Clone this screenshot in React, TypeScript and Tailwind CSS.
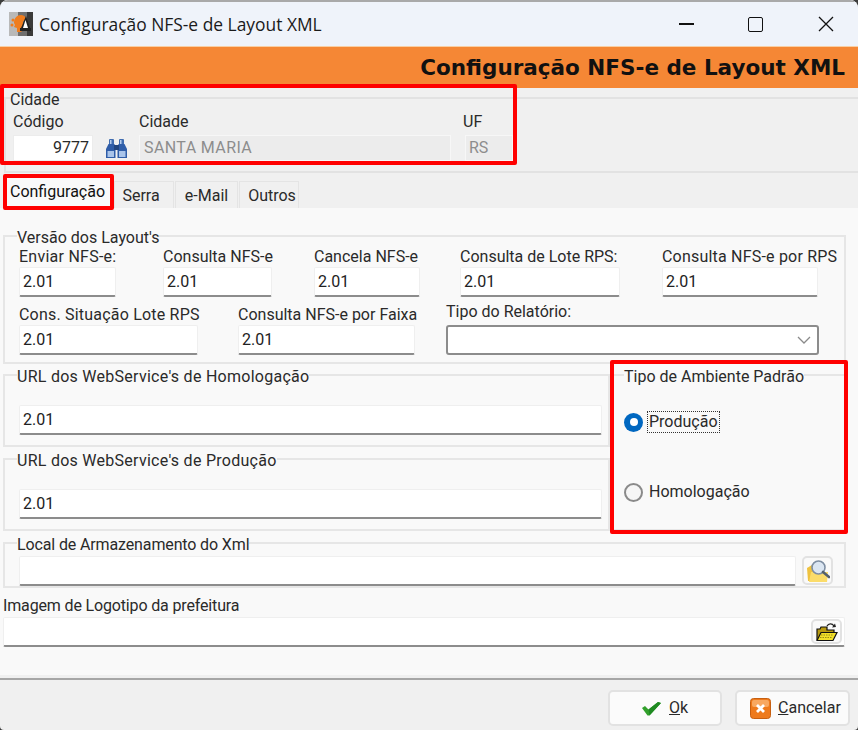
import type { ReactNode } from "react";

const AppIcon = () => (
  <svg width="24" height="24" viewBox="0 0 24 24" className="shrink-0">
    <rect x="0" y="0" width="24" height="24" fill="#6f6f6f" />
    <rect x="0" y="0" width="9" height="24" fill="#b9b9b9" />
    <rect x="18" y="0" width="6" height="24" fill="#3a3a3a" />
    <path d="M5 11c0-5 3-8 7-8 2 0 4 1 5 3l-3 4v8l-2 2H8v-4l-3-1 1-2z" fill="#ef7d1f" />
    <circle cx="4" cy="8" r="1.5" fill="#ef7d1f" />
    <circle cx="3" cy="13" r="1.5" fill="#ef7d1f" />
    <path d="M17 4l4 12h1v3H11v-3h1z" fill="#222" />
    <path d="M16.5 8l2.5 8h-5z" fill="#fff" />
  </svg>
);

const Binoculars = () => (
  <svg width="23" height="20" viewBox="0 0 23 20" className="shrink-0">
    <rect x="4" y="0" width="5" height="6" rx="1" fill="#3f6cb0" />
    <rect x="14" y="0" width="5" height="6" rx="1" fill="#3f6cb0" />
    <path d="M3.500 5h6l1 5v9H1V10z" fill="#2f5da8" />
    <path d="M13.500 5h6l2.500 5v9H12.500V10z" fill="#2f5da8" />
    <rect x="9" y="6" width="5" height="5" fill="#21457f" />
    <rect x="2.500" y="12" width="6.500" height="6" fill="#a9c4ea" />
    <rect x="14" y="12" width="6.500" height="6" fill="#a9c4ea" />
    <rect x="5" y="1" width="1.500" height="4" fill="#b4cbed" />
    <rect x="15" y="1" width="1.500" height="4" fill="#b4cbed" />
  </svg>
);

const FolderSearch = () => (
  <svg width="24" height="24" viewBox="0 0 24 24">
    <path d="M1 9l5-3h4v16H2z" fill="#efc23f" />
    <path d="M3 23l2-10h17l-1 10z" fill="#fbdc6a" />
    <circle cx="12.500" cy="8.500" r="6.500" fill="#dbe6f2" stroke="#7f8fa3" strokeWidth="1.600" />
    <path d="M17 13l6 5" stroke="#55606e" strokeWidth="2.600" strokeLinecap="round" />
  </svg>
);

const FolderOpen = () => (
  <svg width="22" height="20" viewBox="0 0 22 20">
    <path d="M1 18V7h3l1-2h6v3h7v3" fill="#b89a10" stroke="#111" strokeWidth="1.200" />
    <path d="M1 18.500l4-8h16l-4 8z" fill="#f2e02a" stroke="#111" strokeWidth="1.200" />
    <path d="M5 13h12M4 15.500h12" stroke="#8f8410" strokeWidth="0.900" strokeDasharray="1.500 1" />
    <path d="M11 4c1.500-2.500 5-3 7 0" fill="none" stroke="#222" strokeWidth="1.300" />
    <path d="M16 5.500l4-.5-1-3.500z" fill="#222" />
  </svg>
);

const CheckIcon = () => (
  <svg width="21" height="15" viewBox="0 0 21 15">
    <path d="M1 7l3-2 3.500 3.500L17 1l3 1-11.500 12.500h-2z" fill="#32a02c" />
    <path d="M7.500 8.500L17 1l3 1-11.500 12.500z" fill="#1f8a22" />
  </svg>
);

const CancelIcon = () => (
  <svg width="21" height="21" viewBox="0 0 21 21">
    <rect x="0.500" y="0.500" width="20" height="20" rx="3" fill="#ee7a1c" stroke="#c75f10" />
    <rect x="2" y="2" width="17" height="7" rx="2" fill="#f8a860" />
    <path d="M7 7l7 7M14 7l-7 7" stroke="#fff" strokeWidth="2.800" />
  </svg>
);

// caixa de texto no estilo Windows: borda clara e linha escura embaixo
function TextBox({ value, className = "" }: { value?: string; className?: string }) {
  return (
    <div
      className={`h-[30px] bg-white border border-[#efefef] border-b-2 border-b-[#8c8c8c] rounded-[2px] px-[3px] text-[16px] leading-[28px] text-[#222] ${className}`}
    >
      {value}
    </div>
  );
}

function Field({ label, width, className = "", labelClass = "" }: { label: string; width: string; className?: string; labelClass?: string }) {
  return (
    <div className={`shrink-0 ${width} ${className}`}>
      <div className={`h-[20px] mb-[1px] leading-[22px] whitespace-nowrap ${labelClass}`}>{label}</div>
      <TextBox value="2.01" />
    </div>
  );
}

function Group({ title, className = "", legendClass = "", children }: { title: string; className?: string; legendClass?: string; children: ReactNode }) {
  return (
    <fieldset className={`min-w-0 border-2 border-[#e6e6e6] pl-[14px] pr-[6px] ${className}`}>
      <legend className={`-ml-[2px] h-[20px] leading-[23px] whitespace-nowrap ${legendClass}`}>{title}</legend>
      {children}
    </fieldset>
  );
}

function Tab({ label, className = "" }: { label: string; className?: string }) {
  return (
    <div className={`h-[27px] flex items-center justify-center border border-b-0 border-[#e4e4e4] bg-[#f0f0f0] ${className}`}>
      {label}
    </div>
  );
}

function Radio({ checked, label, className = "" }: { checked?: boolean; label: string; className?: string }) {
  return (
    <div className={`flex items-center ${className}`}>
      {checked ? (
        <div className="w-[19px] h-[19px] rounded-full bg-[#0067c0] flex items-center justify-center shrink-0">
          <div className="w-[8px] h-[8px] rounded-full bg-white" />
        </div>
      ) : (
        <div className="w-[19px] h-[19px] rounded-full border-2 border-[#8a8a8a] bg-[#f6f6f6] shrink-0" />
      )}
      <span
        className={
          checked
            ? "ml-[4px] h-[22px] leading-[20px] px-[1px] border border-dotted border-[#333]"
            : "ml-[6px] leading-[22px]"
        }
      >
        {label}
      </span>
    </div>
  );
}

function FooterButton({ children, className = "" }: { children: ReactNode; className?: string }) {
  return (
    <div className={`h-[36px] flex items-center bg-[#fbfbfb] border-2 border-[#e2e2e2] rounded-[5px] ${className}`}>
      {children}
    </div>
  );
}

export default function App() {
  return (
    <div className="relative w-[858px] h-[730px] overflow-hidden bg-[#3c3c3c]">
      <div
        className="w-full h-full flex flex-col bg-[#f0f0f0] text-[#2a2a2a] text-[16px] rounded-t-[8px] rounded-b-[4px] overflow-hidden"
        style={{ fontFamily: 'Roboto, "Noto Sans", sans-serif' }}
      >
        {/* Barra de titulo */}
        <div className="h-[46px] shrink-0 flex items-center pl-[9px] bg-[#eff3fa] border-t-2 border-[#a9a9a9]">
          <AppIcon />
          <span
            className="ml-[6px] text-[17.400px] text-[#1a1a1a]"
            style={{ fontFamily: '"Open Sans", sans-serif' }}
          >
            Configuração NFS-e de Layout XML
          </span>
          <div className="ml-auto flex items-center pr-[24px]">
            <div className="w-[15px] h-[1.500px] bg-[#111]" />
            <div className="ml-[54px] w-[15px] h-[15px] border-[1.500px] border-[#111] rounded-[2px]" />
            <svg width="16" height="16" viewBox="0 0 16 16" className="ml-[55px]">
              <path d="M1 1l14 14M15 1L1 15" stroke="#111" strokeWidth="1.300" />
            </svg>
          </div>
        </div>

        {/* Faixa laranja */}
        <div className="h-[42px] shrink-0 flex items-center justify-end pr-[13px] pt-[2px] bg-[#f58735] border-t border-[#f9cfa4]">
          <span
            className="text-[21.500px] font-bold text-[#111]"
            style={{ fontFamily: '"DejaVu Sans", sans-serif' }}
          >
            Configuração NFS-e de Layout XML
          </span>
        </div>

        {/* Cidade */}
        <fieldset className="h-[85px] shrink-0 ml-[4px] -mr-[4px] border-2 border-[#e2e2e2] px-[7px]">
          <legend className="-ml-[3px] h-[20px] leading-[23px]">Cidade</legend>
          <div className="flex mt-[3px] items-start">
            <div className="w-[80px]">
              <div className="h-[20px] leading-[22px]">Código</div>
              <div className="mt-[4px] h-[26px] bg-white border border-[#ececec] text-right pr-[3px] leading-[23px]">9777</div>
            </div>
            <div className="mt-[28px] ml-[12px]">
              <Binoculars />
            </div>
            <div className="w-[312px] ml-[11px]">
              <div className="h-[20px] leading-[22px]">Cidade</div>
              <div className="mt-[4px] h-[26px] bg-[#ececec] border border-[#f7f7f7] pl-[4px] leading-[23px] tracking-[0.4px] text-[#8d8d8d]">SANTA MARIA</div>
            </div>
            <div className="w-[48px] ml-[14px]">
              <div className="h-[20px] leading-[22px] -ml-[2px]">UF</div>
              <div className="mt-[4px] h-[26px] bg-[#ececec] border border-[#f7f7f7] pl-[3px] leading-[23px] text-[#8d8d8d]">RS</div>
            </div>
          </div>
        </fieldset>

        {/* Abas */}
        <div className="h-[35px] shrink-0 flex items-end pl-[7px]">
          <div className="w-[103px] h-[30px] flex items-center justify-center bg-[#f9f9f9] text-[#111] pb-[2px] pr-[2px]">Configuração</div>
          <Tab label="Serra" className="w-[60px] ml-[4px] pt-[2px] pr-[6px]" />
          <Tab label="e-Mail" className="w-[63px] ml-[1px] pt-[2px]" />
          <Tab label="Outros" className="w-[60px] ml-[1px] pt-[2px] pl-[6px]" />
        </div>

        {/* Painel da aba */}
        <div className="h-[467px] shrink-0 bg-[#f9f9f9] px-[3px] pt-[18px] flex flex-col">
          <Group title="Versão dos Layout's" className="h-[138px] shrink-0 w-[843px]">
            <div className="flex">
              <Field label="Enviar NFS-e:" width="w-[97px]" labelClass="tracking-[0.25px]" />
              <Field label="Consulta NFS-e" width="w-[109px]" className="ml-[47px]" />
              <Field label="Cancela NFS-e" width="w-[106px]" className="ml-[42px]" />
              <Field label="Consulta de Lote RPS:" width="w-[160px]" className="ml-[40px]" />
              <Field label="Consulta NFS-e por RPS" width="w-[156px]" className="ml-[42px]" labelClass="tracking-[0.2px]" />
            </div>
            <div className="flex mt-[7px]">
              <Field label="Cons. Situação Lote RPS" width="w-[179px]" labelClass="tracking-[0.2px]" />
              <Field label="Consulta NFS-e por Faixa" width="w-[177px]" className="ml-[40px]" />
              <div className="w-[373px] ml-[31px] shrink-0">
                <div className="h-[20px] mb-[1px] leading-[22px] -translate-y-[3px]">Tipo do Relatório:</div>
                <div className="h-[30px] flex items-center justify-end pr-[6px] bg-white border-2 border-[#8c8c8c] rounded-[3px]">
                  <svg width="14" height="9" viewBox="0 0 14 9">
                    <path d="M1 1l6 6 6-6" fill="none" stroke="#8a8a8a" strokeWidth="1.300" />
                  </svg>
                </div>
              </div>
            </div>
          </Group>

          <div className="flex mt-[1px] shrink-0">
            <div className="w-[607px] shrink-0">
              <Group title="URL dos WebService's de Homologação" className="h-[82px]" legendClass="tracking-[0.27px]">
                <TextBox value="2.01" className="mt-[20px]" />
              </Group>
              <Group title="URL dos WebService's de Produção" className="h-[82px] mt-[2px]" legendClass="tracking-[0.27px]">
                <TextBox value="2.01" className="mt-[20px]" />
              </Group>
            </div>
            <Group title="Tipo de Ambiente Padrão" className="w-[236px] h-[166px]">
              <Radio checked label="Produção" className="mt-[26px] -ml-[2px]" />
              <Radio label="Homologação" className="mt-[48px] -ml-[2px]" />
            </Group>
          </div>

          <Group title="Local de Armazenamento do Xml" className="h-[55px] w-[843px] mt-[2px] shrink-0" legendClass="tracking-[-0.13px]">
            <div className="flex mt-[3px]">
              <TextBox className="w-[777px] h-[29px]" />
              <div className="ml-[6px] w-[31px] h-[29px] flex items-center justify-center bg-[#fafafa] border-2 border-[#e2e2e2] rounded-[5px]">
                <FolderSearch />
              </div>
            </div>
          </Group>

          <div className="mt-[7px] h-[20px] leading-[22px] tracking-[-0.15px]">Imagem de Logotipo da prefeitura</div>
          <div className="mt-[2px] w-[842px] h-[30px] flex items-center justify-end pr-[2px] bg-white border border-[#efefef] border-b-2 border-b-[#8c8c8c] rounded-[2px]">
            <div className="w-[31px] h-[25px] flex items-center justify-center bg-[#fafafa] border-2 border-[#e2e2e2] rounded-[5px]">
              <FolderOpen />
            </div>
          </div>
        </div>

        {/* Rodape */}
        <div className="flex-1 flex justify-end pr-[8px] pt-[10px] border-t-2 border-[#a6a6a6] mt-[3px]">
          <FooterButton className="w-[114px] pl-[31px]">
            <CheckIcon />
            <span className="ml-[7px]"><span className="underline">O</span>k</span>
          </FooterButton>
          <FooterButton className="w-[115px] ml-[13px] pl-[13px]">
            <CancelIcon />
            <span className="ml-[7px]"><span className="underline">C</span>ancelar</span>
          </FooterButton>
        </div>
      </div>

      {/* Marcacoes vermelhas sobre a captura */}
      <div className="absolute left-0 top-[84px] w-[517px] h-[81px] border-[4.500px] border-[#ff0000] rounded-[2px]" />
      <div className="absolute left-[3px] top-[174px] w-[111px] h-[36px] border-4 border-[#ff0000] rounded-[2px]" />
      <div className="absolute left-[610px] top-[360px] w-[238px] h-[174px] border-[4.500px] border-[#ff0000] rounded-[2px]" />
    </div>
  );
}
